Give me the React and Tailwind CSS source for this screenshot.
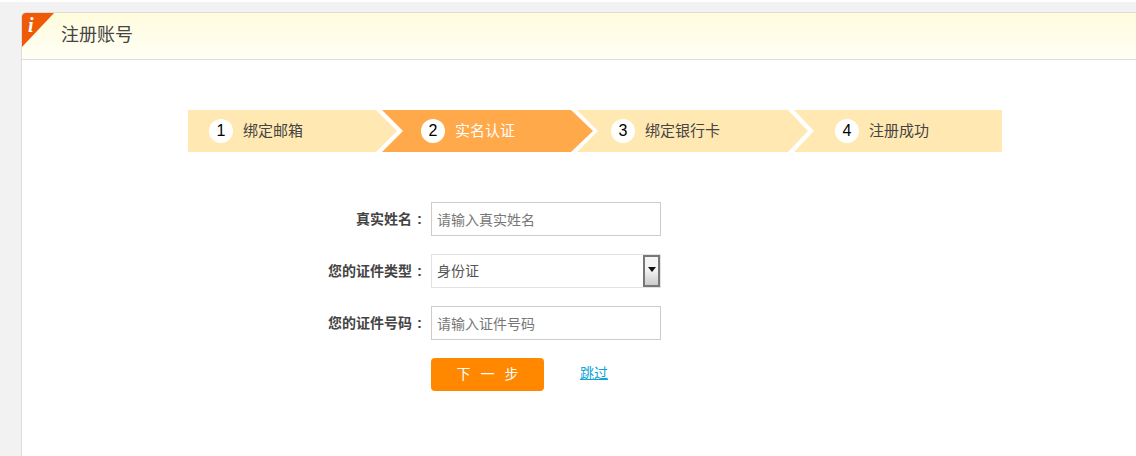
const font = "font-['Liberation_Sans','Noto_Sans_CJK_SC',sans-serif]";

const steps = [
  {
    num: 1,
    label: "绑定邮箱",
    box: "w-[209px] pl-[21px] bg-[#ffe8b2] text-[#444] [clip-path:polygon(0_0,188px_0,209px_21px,188px_42px,0_42px)]",
  },
  {
    num: 2,
    label: "实名认证",
    box: "w-[211px] -ml-[15px] pl-[39px] bg-[#ffa94a] text-white [clip-path:polygon(0_0,189px_0,211px_21px,189px_42px,0_42px,21px_21px)]",
  },
  {
    num: 3,
    label: "绑定银行卡",
    box: "w-[231px] -ml-[16px] pl-[34px] bg-[#ffe8b2] text-[#444] [clip-path:polygon(0_0,211px_0,231px_21px,211px_42px,0_42px,21px_21px)]",
  },
  {
    num: 4,
    label: "注册成功",
    box: "w-[208px] -ml-[14px] pl-[41px] bg-[#ffe8b2] text-[#444] [clip-path:polygon(0_0,208px_0,208px_42px,0_42px,20px_21px)]",
  },
];

function Row({ label, children }) {
  return (
    <div className="flex items-center h-[34px]">
      <label className="w-[244px] pr-[9px] text-right text-[14px] font-bold text-[#444]">
        {label}
        <span className="ml-[5px] text-[15px]">:</span>
      </label>
      {children}
    </div>
  );
}

export default function App() {
  return (
    <div className={`${font} h-[456px] overflow-hidden bg-[#f2f2f2] pt-[10px] pl-[21px] border-t-2 border-white box-border`}>
      <div className="relative w-[1130px] h-[460px] bg-white border border-[#ddd] rounded-tl-[5px] overflow-hidden">
        {/* Header */}
        <div className="h-[47px] bg-gradient-to-b from-[#fffbdc] to-[#fffff6] border-b border-[#ddd] pl-[39px] flex items-center">
          <h1 className="text-[18px] text-[#444] font-normal -mt-[1px]">注册账号</h1>
        </div>
        <div className="absolute top-0 left-0 w-[32px] h-[34px] bg-[#ee5a06] [clip-path:polygon(0_0,100%_0,0_100%)]" />
        <span className="absolute top-[2px] left-[6px] text-white text-[20px] font-bold italic font-['Liberation_Serif',serif] leading-[20px]">
          i
        </span>

        {/* Steps */}
        <div className="flex mt-[50px] ml-[166px]">
          {steps.map((s) => (
            <div key={s.num} className={`${s.box} h-[42px] flex items-center gap-[10px] text-[15px] shrink-0`}>
              <span className="w-[24px] h-[24px] rounded-full bg-white text-black text-[16px] flex items-center justify-center">
                {s.num}
              </span>
              {s.label}
            </div>
          ))}
        </div>

        {/* Form */}
        <div className="mt-[50px] ml-[165px] flex flex-col gap-[18px]">
          <Row label="真实姓名">
            <input
              placeholder="请输入真实姓名"
              className="w-[230px] h-[34px] border border-[#ccc] pl-[5px] pt-[1px] text-[14px] placeholder:text-[#777] outline-none"
            />
          </Row>
          <Row label="您的证件类型">
            <div className="relative w-[230px] h-[34px]">
              <select className="w-full h-full border border-[#e2e2e2] pl-[5px] pt-[1px] text-[14px] text-[#555] appearance-none outline-none bg-white">
                <option>身份证</option>
              </select>
              <span className="absolute top-[1px] right-[1px] w-[17px] h-[32px] border-2 border-[#777] bg-gradient-to-b from-[#f4f4f4] from-45% to-[#ccc] flex items-center justify-center">
                <svg width="8" height="5" viewBox="0 0 8 5" className="-mt-[3px]">
                  <path d="M0 0h8L4 5z" fill="#111" />
                </svg>
              </span>
            </div>
          </Row>
          <Row label="您的证件号码">
            <input
              placeholder="请输入证件号码"
              className="w-[230px] h-[34px] border border-[#ccc] pl-[5px] pt-[1px] text-[14px] placeholder:text-[#777] outline-none"
            />
          </Row>
          <div className="flex items-center pl-[244px]">
            <button className="w-[113px] h-[33px] rounded-[4px] bg-[#ff8800] text-white text-[14px] flex items-center justify-center gap-[10px]">
              <span>下</span>
              <span>一</span>
              <span>步</span>
            </button>
            <a href="#" className="ml-[36px] -mt-[2px] text-[14px] text-[#0ea5d8] underline">
              跳过
            </a>
          </div>
        </div>
      </div>
    </div>
  );
}
